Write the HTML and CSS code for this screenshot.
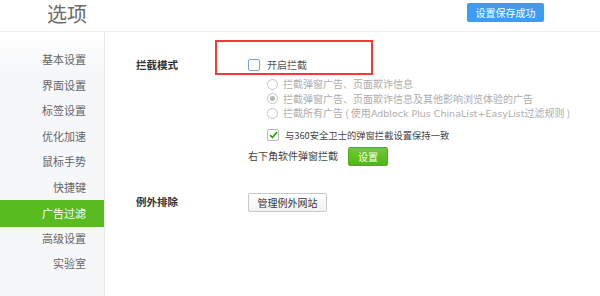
FILE: index.html
```html
<!DOCTYPE html>
<html lang="zh-CN">
<head>
  <meta charset="UTF-8">
  <meta name="viewport" content="width=device-width, initial-scale=1">
  <title>选项</title>
  <link rel="stylesheet" href="styles.css">
</head>
<body>

  <header class="topbar">
    <h1 class="title">选项</h1>
    <span class="save-tip">设置保存成功</span>
  </header>

  <div class="page">
    <nav class="sidebar">
      <a class="nav-item">基本设置</a>
      <a class="nav-item">界面设置</a>
      <a class="nav-item">标签设置</a>
      <a class="nav-item">优化加速</a>
      <a class="nav-item">鼠标手势</a>
      <a class="nav-item">快捷键</a>
      <a class="nav-item active">广告过滤</a>
      <a class="nav-item">高级设置</a>
      <a class="nav-item">实验室</a>
    </nav>

    <main class="content">
      <section class="row">
        <div class="label">拦截模式</div>
        <div class="opts">
          <span class="highlight-box"></span>
          <div class="line main-check">
            <span class="checkbox"></span><span>开启拦截</span>
          </div>
          <div class="radios">
            <div class="line radio-line"><span class="radio"></span><span>拦截弹窗广告、页面欺诈信息</span></div>
            <div class="line radio-line"><span class="radio checked"></span><span>拦截弹窗广告、页面欺诈信息及其他影响浏览体验的广告</span></div>
            <div class="line radio-line"><span class="radio"></span><span>拦截所有广告 ( 使用<span class="latin">Adblock Plus ChinaList+EasyList</span>过滤规则 )</span></div>
          </div>
          <div class="line sync-check">
            <span class="checkbox on">
              <svg width="9" height="8" viewBox="0 0 9 8"><path d="M1 4.2 L3.4 6.5 L8 1.2" fill="none" stroke="#2ea61b" stroke-width="1.8"/></svg>
            </span><span>与360安全卫士的弹窗拦截设置保持一致</span>
          </div>
          <div class="line popup-row">
            <span>右下角软件弹窗拦截</span>
            <button class="btn-green">设置</button>
          </div>
        </div>
      </section>

      <section class="row row-except">
        <div class="label">例外排除</div>
        <div class="opts">
          <button class="btn-plain">管理例外网站</button>
        </div>
      </section>
    </main>
  </div>

</body>
</html>
```

FILE: styles.css
```css
body {
  margin: 0;
  font-family: "Noto Sans CJK SC", "Noto Sans", sans-serif;
  background: #fff;
  color: #444;
  width: 600px;
  height: 296px;
  overflow: hidden;
}
.topbar {
  height: 31px;
  border-bottom: 1px solid #ececec;
  display: flex;
  justify-content: space-between;
  align-items: flex-start;
  padding: 0 56px 0 47px;
}
.title {
  margin: 0;
  font-size: 20px;
  font-weight: normal;
  line-height: 28px;
  color: #6b6b6b;
}
.save-tip {
  margin-top: 3px;
  width: 77px;
  height: 19px;
  line-height: 19px;
  text-align: center;
  font-size: 10px;
  color: #fff;
  background: #3d9cf4;
  border-radius: 2px;
}
.page {
  display: flex;
  height: 264px;
}
.sidebar {
  width: 104px;
  border-right: 1px solid #e8e8e8;
  background: linear-gradient(to bottom, #fff, #f6f7f9 40px, #f6f7f9);
  padding-top: 15px;
  display: flex;
  flex-direction: column;
}
.nav-item {
  height: 25.5px;
  line-height: 25.5px;
  text-align: right;
  padding-right: 18px;
  font-size: 11px;
  color: #666;
  cursor: pointer;
}
.nav-item.active {
  background: #58bb1f;
  color: #fff;
  height: 27px;
  line-height: 27px;
  margin-bottom: -1.5px;
}
.content {
  flex: 1;
  padding: 26px 0 0 31px;
}
.row {
  display: flex;
}
.label {
  width: 112px;
  font-size: 10.5px;
  font-weight: bold;
  color: #333;
  line-height: 14px;
}
.opts {
  position: relative;
  font-size: 10px;
}
.line {
  display: flex;
  align-items: center;
  line-height: 14px;
  white-space: nowrap;
}
.latin {
  font-family: "DejaVu Sans", "Noto Sans", sans-serif;
  font-size: 9.5px;
}
.highlight-box {
  position: absolute;
  left: -33px;
  top: -18px;
  width: 158px;
  height: 35px;
  box-sizing: border-box;
  border: 2px solid #f23a3a;
}
.main-check {
  color: #555;
}
.checkbox {
  width: 12px;
  height: 12px;
  box-sizing: border-box;
  border: 1.5px solid #7c9fe4;
  border-radius: 2px;
  margin-right: 7px;
  display: flex;
  align-items: center;
  justify-content: center;
}
.checkbox.on {
  border: 1px solid #b8b8b8;
}
.radios {
  margin: 5px 0 0 19px;
  color: #adadad;
}
.radio-line {
  height: 14.5px;
}
.radio {
  width: 11px;
  height: 11px;
  box-sizing: border-box;
  border: 1px solid #c4c4c4;
  border-radius: 50%;
  margin-right: 5px;
  display: flex;
  align-items: center;
  justify-content: center;
}
.radio.checked::after {
  content: "";
  width: 5px;
  height: 5px;
  border-radius: 50%;
  background: #b5b5b5;
}
.sync-check {
  margin: 7px 0 0 19px;
  color: #444;
  font-size: 9.3px;
}
.sync-check .checkbox {
  margin-right: 6px;
}
.popup-row {
  margin-top: 5px;
  height: 19px;
  color: #444;
}
.btn-green {
  margin-left: 10px;
  width: 40px;
  height: 19px;
  padding: 0;
  border: 1px solid #4fad19;
  border-radius: 2px;
  background: linear-gradient(to bottom, #72c83a, #52b31c);
  color: #fff;
  font-family: inherit;
  font-size: 10px;
}
.row-except {
  margin-top: 27px;
  align-items: center;
}
.btn-plain {
  width: 79px;
  height: 19px;
  padding: 0;
  border: 1px solid #c9c9c9;
  border-radius: 2px;
  background: linear-gradient(to bottom, #fff, #f2f2f2);
  color: #333;
  font-family: inherit;
  font-size: 10px;
}
```
